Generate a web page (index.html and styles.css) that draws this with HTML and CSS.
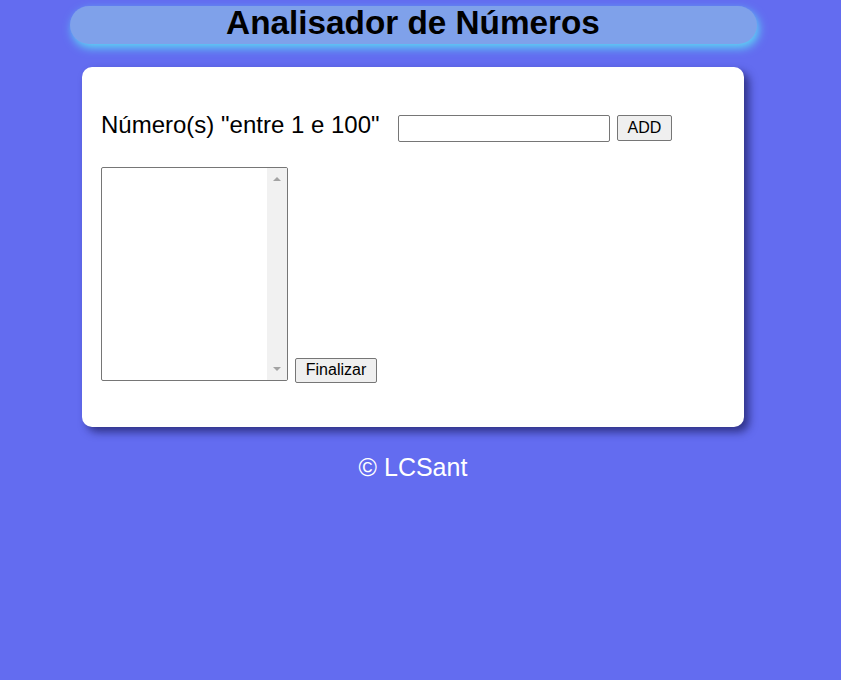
FILE: index.html
```html
<!DOCTYPE html>
<html lang="pt-BR">
<head>
<meta charset="utf-8">
<title>Analisador de Números</title>
<link rel="stylesheet" href="styles.css">
</head>
<body>
<div class="page">
  <header class="title-bar">
    <h1>Analisador de Números</h1>
  </header>
  <main class="card">
    <div class="row-input">
      <label class="label" for="num">Número(s) "entre 1 e 100"</label>
      <input class="num-input" type="number" id="num">
      <button class="btn" type="button">ADD</button>
    </div>
    <div class="row-list">
      <div class="listbox">
        <div class="list-area"></div>
        <div class="track">
          <span class="arrow arrow-up"></span>
          <span class="arrow arrow-down"></span>
        </div>
      </div>
      <button class="btn btn-final" type="button">Finalizar</button>
    </div>
  </main>
  <footer class="footer">© LCSant</footer>
</div>
</body>
</html>
```
FILE: styles.css
```css
html, body {
  margin: 0;
  padding: 0;
}
body {
  background: #636cf0;
  font-family: "Liberation Sans", Arial, sans-serif;
  padding-top: 6px;
}
.page {
  width: 826px;
}
.title-bar {
  width: 687px;
  height: 38px;
  margin: 0 auto;
  box-sizing: border-box;
  padding-bottom: 4px;
  background: #7fa1ea;
  border-radius: 19px;
  box-shadow: 2px 4px 10px #5fd6f4;
}
.title-bar h1 {
  margin: 0;
  font-size: 33.3px;
  line-height: 34px;
  font-weight: bold;
  text-align: center;
  color: #000;
}
.card {
  width: 662px;
  height: 360px;
  margin: 23px auto 0;
  box-sizing: border-box;
  padding: 44px 18px 0 19px;
  background: #fff;
  border-radius: 10px;
  box-shadow: 5px 5px 9px rgba(20, 20, 80, 0.65);
  display: flex;
  flex-direction: column;
  gap: 25px;
}
.row-input {
  display: flex;
  align-items: baseline;
}
.label {
  font-size: 24px;
  color: #000;
  margin-right: 18px;
}
.num-input {
  width: 212px;
  height: 27px;
  box-sizing: border-box;
  border: 1px solid #767676;
  border-radius: 2px;
  font-size: 16px;
  padding: 1px 2px;
  margin: 0 7px 0 0;
  font-family: "Liberation Sans", Arial, sans-serif;
}
.btn {
  height: 26px;
  box-sizing: border-box;
  padding: 1px 10px;
  font-size: 16px;
  font-family: "Liberation Sans", Arial, sans-serif;
  color: #000;
  background: #efefef;
  border: 1px solid #767676;
  border-radius: 2px;
  margin: 0;
}
.btn-final {
  width: 82px;
  height: 25px;
  padding: 0;
  margin-bottom: -2px;
}
.row-list {
  display: flex;
  align-items: flex-end;
  gap: 7px;
}
.listbox {
  width: 187px;
  height: 214px;
  box-sizing: border-box;
  border: 1px solid #767676;
  border-radius: 2px;
  display: flex;
  overflow: hidden;
  background: #fff;
}
.list-area {
  flex: 1;
}
.track {
  width: 20px;
  background: #f1f1f1;
  display: flex;
  flex-direction: column;
  justify-content: space-between;
  align-items: center;
  padding: 9px 0 9px;
}
.arrow {
  width: 0;
  height: 0;
  border-left: 4px solid transparent;
  border-right: 4px solid transparent;
}
.arrow-up {
  border-bottom: 4px solid #a3a3a3;
}
.arrow-down {
  border-top: 4px solid #a3a3a3;
}
.footer {
  margin-top: 26px;
  text-align: center;
  color: #fff;
  font-size: 25px;
}
```
